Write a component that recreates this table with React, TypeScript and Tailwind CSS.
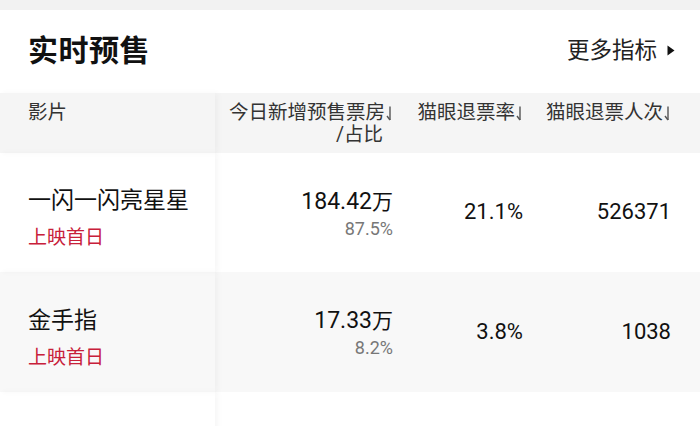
import React from "react";

type Movie = {
  name: string;
  tag: string;
  boxOffice: string;
  share: string;
  refundRate: string;
  refundCount: string;
};

const movies: Movie[] = [
  {
    name: "一闪一闪亮星星",
    tag: "上映首日",
    boxOffice: "184.42",
    share: "87.5%",
    refundRate: "21.1%",
    refundCount: "526371",
  },
  {
    name: "金手指",
    tag: "上映首日",
    boxOffice: "17.33",
    share: "8.2%",
    refundRate: "3.8%",
    refundCount: "1038",
  },
];

const font = { fontFamily: 'Roboto, "Noto Sans CJK SC", sans-serif' };

const SortArrow: React.FC = () => (
  <svg width="7" height="15" viewBox="0 0 7 15" className="inline-block ml-[1px] mb-[1px]">
    <path d="M4 0.5 V14" stroke="#555" strokeWidth="1.4" fill="none" />
    <path d="M4 14 L1 10" stroke="#555" strokeWidth="1.4" fill="none" />
  </svg>
);

const App: React.FC = () => {
  return (
    <div className="w-[700px] h-[426px] bg-white overflow-hidden text-[#222]" style={font}>
      <div className="h-[10px] bg-[#f2f2f2]" />

      <div className="h-[83px] flex items-center justify-between pl-[28px] pr-[25px] pb-[2px]">
        <h1 className="text-[30px] font-bold text-[#111] tracking-[0.5px]">实时预售</h1>
        <div className="flex items-center gap-[10px] text-[22.5px] text-[#222]">
          <span>更多指标</span>
          <svg width="8" height="11" viewBox="0 0 8 11">
            <path d="M0.5 0.5 L7.5 5.5 L0.5 10.5 Z" fill="#111" />
          </svg>
        </div>
      </div>

      {/* header row */}
      <div className="flex h-[60px] bg-[#f5f5f5] text-[19.5px] leading-[22px] text-[#333]">
        <div className="w-[215px] pl-[28px] pt-[9px] shadow-[3px_0_6px_rgba(0,0,0,0.035)] relative z-10">
          影片
        </div>
        <div className="w-[185px] pt-[9px] pr-[7px] text-right">
          <div>
            今日新增预售票房
            <SortArrow />
          </div>
          <div className="pr-[10px]">/占比</div>
        </div>
        <div className="w-[130px] pt-[9px] pr-[7px] text-right">
          猫眼退票率
          <SortArrow />
        </div>
        <div className="flex-1 pt-[9px] pr-[29px] text-right">
          猫眼退票人次
          <SortArrow />
        </div>
      </div>

      {movies.map((m, i) => (
        <div
          key={m.name}
          className={`flex ${i % 2 === 1 ? "h-[120px] bg-[#f8f8f8]" : "h-[119px] bg-white"}`}
        >
          <div className="w-[215px] pl-[28px] flex flex-col justify-center shadow-[3px_0_6px_rgba(0,0,0,0.035)] relative z-10 pt-[12px]">
            <div className="text-[23px] leading-[30px] text-[#111]">{m.name}</div>
            <div className="text-[19px] leading-[26px] mt-[9px] text-[#c8203a]">{m.tag}</div>
          </div>
          <div className="w-[185px] pr-[7px] flex flex-col justify-center items-end pt-[2px]">
            <div className="text-[23px] leading-[30px] text-[#111]">
              {m.boxOffice}
              <span className="text-[21px]">万</span>
            </div>
            <div className="text-[18px] leading-[24px] text-[#777]">{m.share}</div>
          </div>
          <div className="w-[130px] pr-[7px] flex items-center justify-end text-[22px] text-[#111] pb-[2px]">
            {m.refundRate}
          </div>
          <div className="flex-1 pr-[29px] flex items-center justify-end text-[22px] text-[#111] pb-[2px]">
            {m.refundCount}
          </div>
        </div>
      ))}

      <div className="flex h-[40px]">
        <div className="w-[215px] shadow-[3px_0_6px_rgba(0,0,0,0.035)] relative z-10" />
      </div>
    </div>
  );
};

export default App;
